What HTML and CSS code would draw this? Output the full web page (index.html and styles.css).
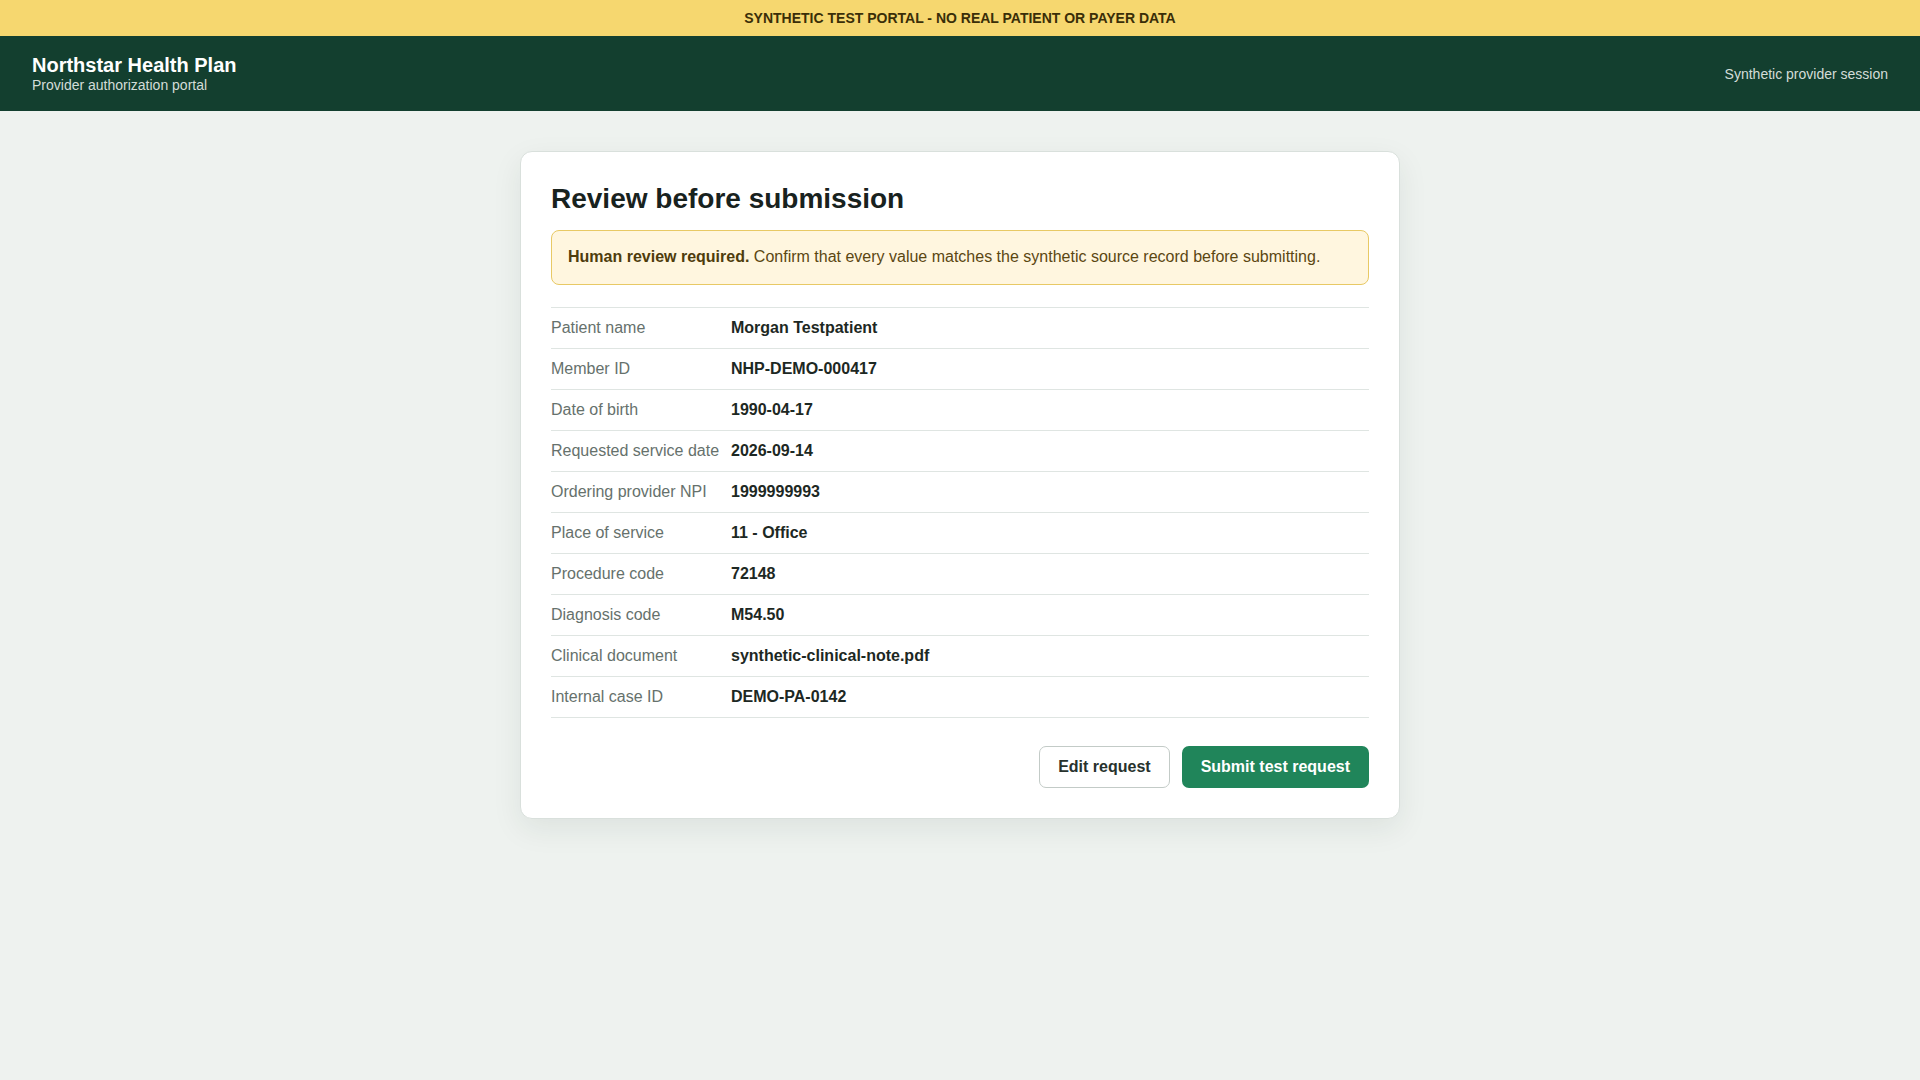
FILE: index.html
```html
<!DOCTYPE html>
<html lang="en">
<head>
<meta charset="utf-8">
<title>Review before submission</title>
<link rel="stylesheet" href="styles.css">
</head>
<body>
<div class="banner">SYNTHETIC TEST PORTAL - NO REAL PATIENT OR PAYER DATA</div>
<header class="topbar">
  <div class="brand">
    <div class="brand-name">Northstar Health Plan</div>
    <div class="brand-sub">Provider authorization portal</div>
  </div>
  <div class="session">Synthetic provider session</div>
</header>
<main class="main">
  <section class="card">
    <h1 class="title">Review before submission</h1>
    <div class="alert"><strong>Human review required.</strong> Confirm that every value matches the synthetic source record before submitting.</div>
    <dl class="details">
      <div class="row"><dt>Patient name</dt><dd>Morgan Testpatient</dd></div>
      <div class="row"><dt>Member ID</dt><dd>NHP-DEMO-000417</dd></div>
      <div class="row"><dt>Date of birth</dt><dd>1990-04-17</dd></div>
      <div class="row"><dt>Requested service date</dt><dd>2026-09-14</dd></div>
      <div class="row"><dt>Ordering provider NPI</dt><dd>1999999993</dd></div>
      <div class="row"><dt>Place of service</dt><dd>11 - Office</dd></div>
      <div class="row"><dt>Procedure code</dt><dd>72148</dd></div>
      <div class="row"><dt>Diagnosis code</dt><dd>M54.50</dd></div>
      <div class="row"><dt>Clinical document</dt><dd>synthetic-clinical-note.pdf</dd></div>
      <div class="row"><dt>Internal case ID</dt><dd>DEMO-PA-0142</dd></div>
    </dl>
    <div class="actions">
      <button class="btn btn-secondary" type="button">Edit request</button>
      <button class="btn btn-primary" type="button">Submit test request</button>
    </div>
  </section>
</main>
</body>
</html>
```
FILE: styles.css
```css
* { box-sizing: border-box; }
html, body {
  margin: 0;
  padding: 0;
}
body {
  font-family: "Liberation Sans", Arial, sans-serif;
  background: #eef2ef;
  color: #1b2621;
  min-height: 1080px;
}
.banner {
  height: 36px;
  background: #f6d76f;
  color: #3a2e08;
  font-size: 14px;
  font-weight: 700;
  display: flex;
  align-items: center;
  justify-content: center;
}
.topbar {
  height: 75px;
  background: #133f2f;
  color: #ffffff;
  display: flex;
  align-items: center;
  justify-content: space-between;
  padding: 0 32px;
}
.brand-name {
  font-size: 20px;
  font-weight: 700;
  line-height: 23px;
}
.brand-sub {
  font-size: 14px;
  line-height: 16px;
  color: #d3ddd8;
}
.session {
  font-size: 14px;
  color: #d3ddd8;
}
.main {
  padding: 40px 20px 40px;
  display: flex;
  justify-content: center;
}
.card {
  width: 880px;
  background: #ffffff;
  border: 1px solid #d9e0dc;
  border-radius: 12px;
  padding: 31px 30px 30px;
  box-shadow: 0 10px 30px rgba(20, 50, 40, 0.08);
}
.title {
  margin: 0 0 15px;
  font-size: 28px;
  line-height: 32px;
  font-weight: 700;
  color: #18221e;
}
.alert {
  background: #fff6df;
  border: 1px solid #e8c965;
  border-radius: 8px;
  padding: 14px 16px 15px;
  font-size: 16px;
  line-height: 24px;
  color: #5b4712;
}
.alert strong { color: #4e3c0c; }
.details {
  margin: 22px 0 0;
  border-top: 1px solid #dfe5e2;
}
.row {
  display: grid;
  grid-template-columns: 180px 1fr;
  padding: 8px 0;
  border-bottom: 1px solid #dfe5e2;
  font-size: 16px;
  line-height: 24px;
}
.row dt {
  color: #66716c;
  margin: 0;
}
.row dd {
  margin: 0;
  font-weight: 700;
  color: #1d2823;
}
.actions {
  margin-top: 28px;
  display: flex;
  justify-content: flex-end;
  gap: 12px;
}
.btn {
  font-family: "Liberation Sans", Arial, sans-serif;
  font-size: 16px;
  font-weight: 700;
  line-height: 20px;
  padding: 10px 18px;
  border-radius: 7px;
  border: 1px solid transparent;
  cursor: pointer;
}
.btn-secondary {
  background: #ffffff;
  border-color: #c3cbc7;
  color: #27322d;
}
.btn-primary {
  background: #20855a;
  color: #ffffff;
}
```
